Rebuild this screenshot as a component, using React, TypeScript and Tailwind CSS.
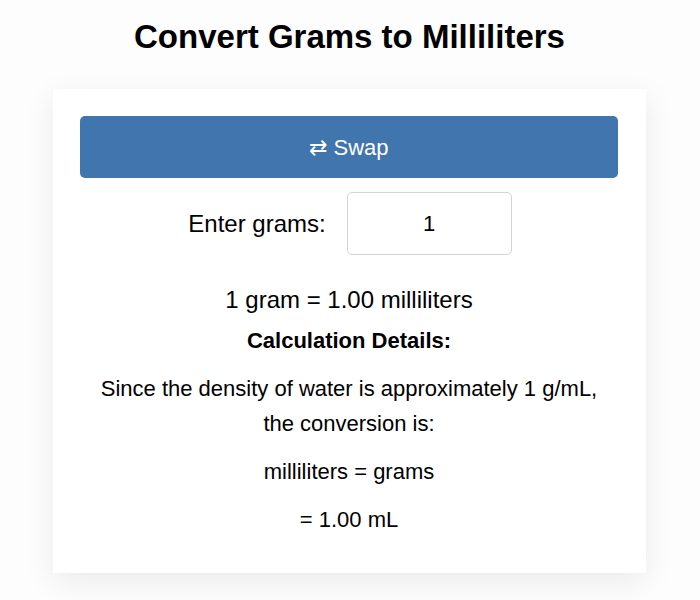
export default function App() {
  return (
    <main
      className="min-h-[600px] bg-[#fdfdfd] pl-[53px] pr-[54px] pt-[16px] text-black"
      style={{ fontFamily: '"Liberation Sans", Arial, sans-serif' }}
    >
      <h1 className="text-center text-[33px] font-bold leading-[42px]">Convert Grams to Milliliters</h1>
      <div className="mt-[31px] bg-white pl-[27px] pr-[28px] pt-[27px] pb-[36px] shadow-[0_8px_30px_rgba(0,0,0,0.08)]">
        <button className="flex h-[62px] w-full items-center justify-center rounded-[5px] bg-[#4075ad] text-[22px] text-white">
          ⇄ Swap
        </button>
        <div className="mt-[14px] flex items-center justify-center gap-[21px] pl-[2px]">
          <label className="text-[24px]">Enter grams:</label>
          <input
            defaultValue="1"
            className="h-[63px] w-[165px] rounded-[5px] border border-[#d4d4d4] text-center text-[22px] outline-none"
          />
        </div>
        <p className="mt-[28px] text-center text-[24px] leading-[34px]">1 gram = 1.00 milliliters</p>
        <p className="mt-[10px] text-center text-[22px] font-bold leading-[28px]">Calculation Details:</p>
        <p className="mt-[16px] text-center text-[22px] leading-[35px]">
          Since the density of water is approximately 1 g/mL,
          <br />
          the conversion is:
        </p>
        <p className="mt-[13px] text-center text-[22px] leading-[35px]">milliliters = grams</p>
        <p className="mt-[13px] text-center text-[22px] leading-[35px]">= 1.00 mL</p>
      </div>
    </main>
  );
}
